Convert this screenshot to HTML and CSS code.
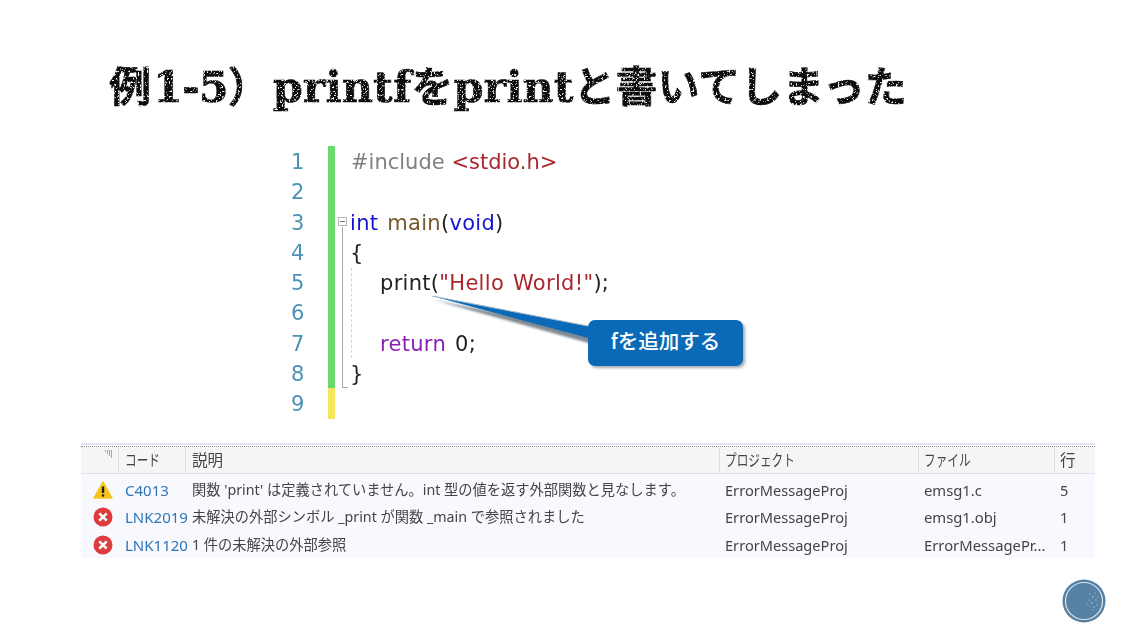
FILE: index.html
```html
<!DOCTYPE html>
<html lang="ja">
<head>
<meta charset="utf-8">
<title>例1-5</title>
<link rel="stylesheet" href="styles.css">
</head>
<body>
<main class="slide">
  <svg class="defs" width="0" height="0" aria-hidden="true">
    <filter id="rough" x="0" y="0" width="100%" height="100%">
      <feTurbulence type="fractalNoise" baseFrequency="0.55" numOctaves="2" seed="4" result="n"/>
      <feColorMatrix in="n" type="matrix" values="0 0 0 0 1  0 0 0 0 1  0 0 0 0 1  0 0 0 -7 2.8" result="speck"/>
      <feComposite in="speck" in2="SourceAlpha" operator="in" result="grain"/>
      <feMerge><feMergeNode in="SourceGraphic"/><feMergeNode in="grain"/></feMerge>
    </filter>
    <filter id="soft" x="-10%" y="-30%" width="120%" height="170%">
      <feGaussianBlur stdDeviation="1"/>
    </filter>
  </svg>

  <h1 class="title"><span class="cjk">例</span><span class="num-part">1-5</span><span class="cjk paren">）</span>printf<span class="cjk">を</span>print<span class="cjk">と書いてしまった</span></h1>

  <section class="code">
    <div class="row"><span class="num">1</span><i class="mark green"></i><code class="src"><span class="c-pre">#include</span> <span class="c-str">&lt;stdio.h&gt;</span></code></div>
    <div class="row"><span class="num">2</span><i class="mark green"></i><code class="src"></code></div>
    <div class="row"><span class="num">3</span><i class="mark green"></i><code class="src src-tight"><span class="c-kw">int</span> <span class="c-fn">main</span>(<span class="c-kw">void</span>)</code></div>
    <div class="row"><span class="num">4</span><i class="mark green"></i><code class="src src-tight">{</code></div>
    <div class="row"><span class="num">5</span><i class="mark green"></i><code class="src src-in">print(<span class="c-str">"Hello World!"</span>);</code></div>
    <div class="row"><span class="num">6</span><i class="mark green"></i><code class="src"></code></div>
    <div class="row"><span class="num">7</span><i class="mark green"></i><code class="src src-in"><span class="c-ret">return</span> 0;</code></div>
    <div class="row"><span class="num">8</span><i class="mark green"></i><code class="src src-tight">}</code></div>
    <div class="row"><span class="num">9</span><i class="mark yellow"></i><code class="src"></code></div>
    <span class="fold-box"></span>
    <span class="fold-line"></span>
    <span class="guide"></span>
  </section>

  <section class="list">
    <div class="dots"></div>
    <div class="grid head">
      <div class="cell sort"><svg width="10" height="8" viewBox="0 0 10 8"><path d="M1 1h1M3 1h1M5 1h1M7 1h1M3 3h1M5 3h1M7 3h1M5 5h1M7 5h1M7 7h1" stroke="#555" stroke-width="1"/></svg></div>
      <div class="cell"><span class="kana">コード</span></div>
      <div class="cell">説明</div>
      <div class="cell right"><span class="kana">プロジェクト</span></div>
      <div class="cell right"><span class="kana">ファイル</span></div>
      <div class="cell right">行</div>
    </div>
    <div class="grid body">
      <div class="cell ic"><svg width="20" height="18" viewBox="0 0 20 18"><path d="M10 1 19 17H1Z" fill="#f7c51c" stroke="#f7c51c" stroke-width="1.5" stroke-linejoin="round"/><path d="M10 5.5v6.5" stroke="#222" stroke-width="2.4"/><circle cx="10" cy="14.5" r="1.3" fill="#222"/></svg></div>
      <div class="cell link">C4013</div>
      <div class="cell desc">関数 'print' は定義されていません。int 型の値を返す外部関数と見なします。</div>
      <div class="cell right">ErrorMessageProj</div>
      <div class="cell right file">emsg1.c</div>
      <div class="cell right">5</div>

      <div class="cell ic"><svg width="20" height="20" viewBox="0 0 20 20"><circle cx="10" cy="10" r="9.5" fill="#de3b3f"/><path d="M6.3 6.3l7.4 7.4M13.7 6.3l-7.4 7.4" stroke="#fff" stroke-width="2.6"/></svg></div>
      <div class="cell link">LNK2019</div>
      <div class="cell desc">未解決の外部シンボル _print が関数 _main で参照されました</div>
      <div class="cell right">ErrorMessageProj</div>
      <div class="cell right file">emsg1.obj</div>
      <div class="cell right">1</div>

      <div class="cell ic"><svg width="20" height="20" viewBox="0 0 20 20"><circle cx="10" cy="10" r="9.5" fill="#de3b3f"/><path d="M6.3 6.3l7.4 7.4M13.7 6.3l-7.4 7.4" stroke="#fff" stroke-width="2.6"/></svg></div>
      <div class="cell link">LNK1120</div>
      <div class="cell desc">1 件の未解決の外部参照</div>
      <div class="cell right">ErrorMessageProj</div>
      <div class="cell right file">ErrorMessagePr...</div>
      <div class="cell right">1</div>
    </div>
  </section>

  <svg class="tail" width="170" height="60" viewBox="0 0 170 60" aria-hidden="true"><path d="M2 4 160 36V48Z" fill="#7f8a94" filter="url(#soft)"/><path d="M0 0 160 31V43Z" fill="#0a6ab8"/><path d="M0 0 156 30" stroke="#9fb4c4" stroke-width="1" fill="none"/></svg>
  <div class="callout">fを追加する</div>

  <svg class="logo" width="44" height="44" viewBox="0 0 44 44" aria-hidden="true">
    <circle cx="22" cy="22" r="21.5" fill="#5581a5"/>
    <circle cx="22" cy="22" r="18.5" fill="none" stroke="#dbe6ee" stroke-width="1.2"/>
    <g fill="#b9cfdc">
      <circle cx="28" cy="15" r=".7"/><circle cx="31" cy="18" r=".8"/><circle cx="34" cy="21" r=".7"/><circle cx="27" cy="21" r=".6"/><circle cx="30" cy="24" r=".8"/><circle cx="35" cy="26" r=".7"/><circle cx="32" cy="28" r=".7"/><circle cx="28" cy="27" r=".6"/><circle cx="33" cy="14" r=".6"/><circle cx="25" cy="25" r=".5"/><circle cx="36" cy="18" r=".5"/><circle cx="31" cy="31" r=".6"/>
    </g>
  </svg>
</main>
</body>
</html>
```
FILE: styles.css
```css
* { box-sizing: border-box; }
html, body { margin: 0; padding: 0; background: #fff; }
.slide {
  position: relative;
  width: 1136px;
  height: 639px;
  overflow: hidden;
  background: #fff;
  font-family: "Noto Sans", "Noto Sans CJK JP", sans-serif;
}
.defs { position: absolute; }

.title {
  margin: 0;
  padding: 55px 0 0 109px;
  height: 146px;
  font-family: "DejaVu Serif", "Noto Sans CJK JP", serif;
  font-size: 43px;
  line-height: 58px;
  font-weight: 700;
  color: #111;
  white-space: nowrap;
  -webkit-text-stroke: .6px #111;
  filter: url(#rough) blur(.3px);
}
.cjk { font-family: "Noto Sans CJK JP", sans-serif; font-size: 42px; font-weight: 700; }
.num-part { margin-left: 2px; letter-spacing: -1px; }
.paren { margin-right: 3px; }

.code {
  position: relative;
  margin-left: 288px;
  width: 400px;
  font-size: 22px;
  filter: blur(.3px);
}
.row {
  display: grid;
  grid-template-columns: 40px 7px 1fr;
  height: 30.3px;
  align-items: center;
}
.num { color: #4a93b5; font-family: "DejaVu Sans", sans-serif; font-size: 21px; line-height: 30px; padding: 1px 0 0 3px; }
.mark { display: block; height: 100%; }
.green { background: #6bd96b; }
.yellow { background: #f7e75e; }
.src {
  font-family: "DejaVu Sans", sans-serif;
  font-size: 21px;
  line-height: 30px;
  color: #222;
  padding: 1px 0 0 16px;
  white-space: pre;
}
.src-tight { padding-left: 15px; letter-spacing: .3px; word-spacing: 2px; }
.src-in { padding-left: 45px; letter-spacing: .3px; word-spacing: 2px; }
.c-pre { color: #808080; }
.c-str { color: #a9282e; }
.c-kw { color: #1616d0; }
.c-fn { color: #75582c; }
.c-ret { color: #8a1fb8; }
.fold-box {
  position: absolute;
  left: 50px; top: 71px;
  width: 9px; height: 9px;
  border: 1px solid #b5b5b5;
  background: linear-gradient(#777, #777) center / 5px 1px no-repeat;
}
.fold-line {
  position: absolute;
  left: 54px; top: 81px;
  width: 6px; height: 161px;
  border-left: 1px solid #a8a8a8;
  border-bottom: 1px solid #a8a8a8;
}
.guide {
  position: absolute;
  left: 63px; top: 122px;
  height: 90px;
  border-left: 1px dashed #d4d4d4;
}

.list {
  margin: 24.3px 0 0 81px;
  width: 1014px;
  font-size: 14.6px;
  color: #444;
  filter: blur(.3px);
}
.dots {
  height: 4px;
  border-top: 2px solid #dfe3f3;
  border-bottom: 1px dotted #888;
}
.grid {
  display: grid;
  grid-template-columns: 38px 67px 534px 199px 136px 40px;
  align-items: center;
}
.head {
  height: 27px;
  background: #f5f5f5;
  border-bottom: 1px solid #dfe2ec;
  font-size: 15.5px;
}
.head .cell {
  height: 100%;
  display: flex;
  align-items: center;
  padding-left: 6px;
  border-right: 1px solid #dcdfe6;
}
.kana { display: inline-block; transform: scaleX(.75); transform-origin: left center; white-space: nowrap; }
.head .cell:last-child { border-right: 0; }
.head .sort { justify-content: flex-end; align-items: flex-start; padding-top: 3px; padding-right: 4px; }
.body {
  background: #f8f9fe;
  grid-auto-rows: 27.5px;
  padding-top: 2px;
  height: 84px;
}
.body .cell { padding-left: 6px; white-space: nowrap; line-height: 20px; }
.body .ic { padding-left: 12px; display: flex; align-items: center; }
.body .desc { font-size: 14.25px; }
.body .file { font-size: 14.8px; }
.body .link { color: #2e75b8; font-size: 15px; }
.head .right, .body .right { padding-left: 5px; }

.tail { position: absolute; left: 432px; top: 296px; }
.callout {
  position: absolute;
  left: 588px; top: 320px;
  width: 155px; height: 46px;
  border-radius: 7px;
  background: #0a6ab8;
  box-shadow: 2px 2px 3px rgba(90, 100, 110, .55);
  color: #fff;
  font-family: "Noto Sans CJK JP", sans-serif;
  font-size: 20.5px;
  font-weight: 500;
  line-height: 41px;
  text-align: center;
}
.logo { position: absolute; left: 1062px; top: 579px; filter: blur(.4px); }
```
